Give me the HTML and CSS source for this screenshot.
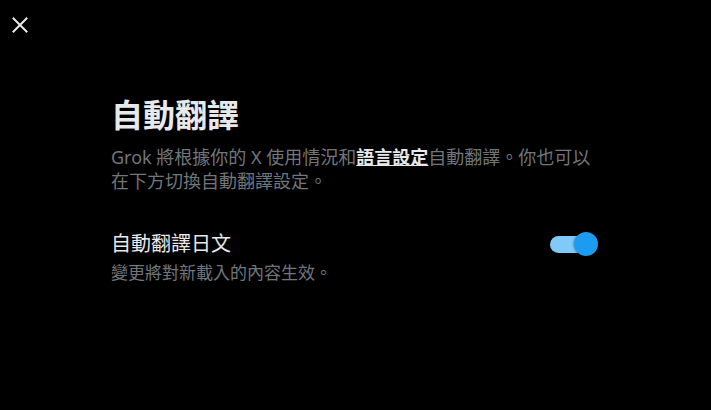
FILE: index.html
```html
<!DOCTYPE html>
<html lang="zh-Hant">
<head>
    <meta charset="UTF-8">
    <meta name="viewport" content="width=device-width, initial-scale=1.0">
    <title>自動翻譯</title>
    <link rel="stylesheet" href="styles.css">
</head>
<body>
    <div id="modal">
        <div class="modal-header">
            <div class="close-button" aria-label="關閉">
                <svg viewBox="0 0 20 20" width="20" height="20">
                    <path d="M3.5 3.5 L16.5 16.5 M16.5 3.5 L3.5 16.5" stroke="#e7e9ea" stroke-width="2" fill="none" stroke-linecap="square"/>
                </svg>
            </div>
        </div>
        <div class="modal-content">
            <h1 class="title">自動翻譯</h1>
            <p class="description">Grok 將根據你的 X 使用情況和<a href="#" class="link">語言設定</a>自動翻譯。你也可以在下方切換自動翻譯設定。</p>
            <div class="setting-row">
                <div class="setting-label">自動翻譯日文</div>
                <div class="toggle on">
                    <div class="toggle-track"></div>
                    <div class="toggle-knob"></div>
                </div>
            </div>
            <div class="setting-note">變更將對新載入的內容生效。</div>
        </div>
    </div>
</body>
</html>
```

FILE: styles.css
```css
body {
    background-color: #000;
    color: #e7e9ea;
    font-family: 'Noto Sans', 'Noto Sans CJK TC', sans-serif;
    margin: 0;
    overflow: hidden;
}
#modal {
    width: 711px;
    height: 410px;
}
.modal-header {
    height: 50px;
    display: flex;
    align-items: center;
    padding-left: 10px;
}
.close-button {
    width: 20px;
    height: 20px;
    cursor: pointer;
}
.close-button svg {
    display: block;
}
.modal-content {
    width: 487px;
    padding: 47px 0 0 111px;
}
.title {
    margin: 0;
    font-size: 32px;
    line-height: 36px;
    font-weight: 700;
}
.description {
    margin: 12px 0 0 0;
    font-size: 18px;
    line-height: 24px;
    color: #71767b;
}
.link {
    color: #e7e9ea;
    font-weight: 700;
    text-decoration: underline;
}
.setting-row {
    margin-top: 39px;
    display: flex;
    align-items: center;
    justify-content: space-between;
}
.setting-label {
    font-size: 20px;
    line-height: 24px;
}
.setting-note {
    margin-top: 5px;
    font-size: 17px;
    line-height: 24px;
    color: #71767b;
}
.toggle {
    position: relative;
    width: 48px;
    height: 24px;
    cursor: pointer;
}
.toggle-track {
    position: absolute;
    left: 0;
    top: 4px;
    width: 44px;
    height: 17px;
    border-radius: 9px;
    background-color: #7fcaf8;
}
.toggle-knob {
    position: absolute;
    right: 0;
    top: 0;
    width: 24px;
    height: 24px;
    border-radius: 50%;
    background-color: #1d9bf0;
    box-shadow: -1px 0 2px rgba(0, 0, 0, 0.25);
}
```
